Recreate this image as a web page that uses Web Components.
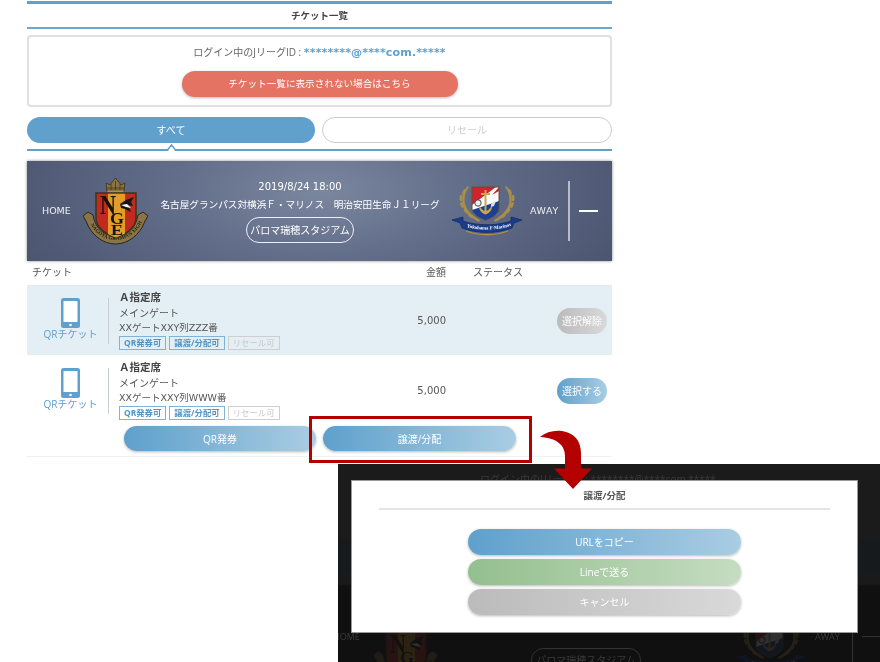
<!DOCTYPE html>
<html lang="ja">
<head>
<meta charset="utf-8">
<title>チケット一覧</title>
<style>
  html, body { margin: 0; padding: 0; background: #fff; }
  body {
    width: 880px; height: 662px; overflow: hidden; position: relative;
    font-family: "Open Sans", "Noto Sans CJK JP", sans-serif; color: #555;
  }
  #page { width: 585px; margin-left: 27px; display: block; filter: blur(.4px); }
</style>
</head>
<body>
<div id="page">
  <title-bar>チケット一覧</title-bar>
  <login-box account="********@****com.*****">チケット一覧に表示されない場合はこちら</login-box>
  <tab-bar></tab-bar>
  <match-card></match-card>
  <ticket-head></ticket-head>
  <ticket-row selected action="選択解除" seat="XXゲートXXY列ZZZ番"></ticket-row>
  <ticket-row action="選択する" seat="XXゲートXXY列WWW番">
    <pill-button style="width:192px">QR発券</pill-button>
    <pill-button style="width:193px">譲渡/分配</pill-button>
  </ticket-row>
</div>
<share-modal></share-modal>
<red-callout></red-callout>

<script>
const FONT = `"Open Sans", "Noto Sans CJK JP", sans-serif`;
const LATIN = `"DejaVu Sans", "Noto Sans CJK JP", sans-serif`;

class TitleBar extends HTMLElement {
    constructor() {
        super();
        this.attachShadow({mode: "open"}).innerHTML = `
            <style>
                :host { display: block; margin-top: 1px; height: 23px; border-top: 3px solid #5fa0cc; border-bottom: 2px solid #6aa8d2; }
                div { height: 23px; text-align: center; font: bold 9.5px/23px ${FONT}; color: #444; }
            </style>
            <div><slot></slot></div>`;
    }
}

class PillButton extends HTMLElement {
    constructor() {
        super();
        this.attachShadow({mode: "open"}).innerHTML = `
            <style>
                :host {
                    display: flex; align-items: center; justify-content: center;
                    height: 25px; border-radius: 13px;
                    background: linear-gradient(90deg, #5fa0cc, #a9cde3);
                    color: #fff; font: 10px/1 ${FONT};
                    box-shadow: 0 1px 3px rgba(0,0,0,.28);
                }
                :host([tone="green"]) { background: linear-gradient(90deg, #94bf8f, #c5dcc0); }
                :host([tone="grey"]) { background: linear-gradient(90deg, #bbbbbb, #d9d9d9); }
                :host([tone="red"]) { background: #e57363; }
            </style>
            <slot></slot>`;
    }
}

class LoginBox extends HTMLElement {
    constructor() {
        super();
        this.attachShadow({mode: "open"}).innerHTML = `
            <style>
                :host { display: block; margin-top: 6px; height: 72px; box-sizing: border-box; border: 2px solid #e0e0e0; border-radius: 4px; background: #fff; padding-top: 7px; }
                .id { text-align: center; font: 10px/16px ${FONT}; color: #666; }
                .id b { color: #5fa0cc; font-size: 11.1px; font-family: "DejaVu Sans", sans-serif; letter-spacing: .1px; }
                pill-button { width: 276px; margin: 10px auto 0; font-size: 9.6px; height: 26px; }
            </style>
            <div class="id">ログイン中のJリーグID : <b>${this.getAttribute('account')}</b></div>
            <pill-button tone="red"><slot></slot></pill-button>`;
    }
}

class TabBar extends HTMLElement {
    constructor() {
        super();
        this.attachShadow({mode: "open"}).innerHTML = `
            <style>
                :host { display: block; margin-top: 10px; height: 34px; position: relative; border-bottom: 2px solid #5fa0cc; box-sizing: border-box; }
                .tabs { display: flex; gap: 7px; }
                .tab { flex: 1; height: 26px; box-sizing: border-box; border-radius: 13px; display: flex; align-items: center; justify-content: center; font: 10px/1 ${FONT}; }
                .on { background: #5fa0cc; color: #fff; }
                .off { border: 1px solid #ccc; color: #ccc; background: #fff; }
                svg { position: absolute; left: 138px; bottom: -2px; }
            </style>
            <div class="tabs"><div class="tab on">すべて</div><div class="tab off">リセール</div></div>
            <svg width="13" height="8" viewBox="0 0 13 8"><path d="M0 7H2.5L6.5 2L10.5 7H13" fill="#fff" stroke="#5fa0cc" stroke-width="1.6"/><path d="M3 8L6.5 3.5L10 8Z" fill="#fff"/></svg>`;
    }
}

class GrampusCrest extends HTMLElement {
    constructor() {
        super();
        this.attachShadow({mode: "open"}).innerHTML = `
            <style>:host { display: block; width: 66px; height: 67px; } svg { display: block; }
            text { font-family: "Liberation Serif", serif; }</style>
            <svg width="66" height="67" viewBox="0 0 66 67">
                <!-- crown -->
                <path d="M25 13L24 5L28 7L31 3L33.5 0L36 3L39 7L43 5L42 13Z" fill="#8c7442" stroke="#3b2f18" stroke-width=".8"/>
                <path d="M25 10H42M29 6V12M33.5 3V12M38 6V12" stroke="#3b2f18" stroke-width=".7" fill="none"/>
                <rect x="25" y="12" width="17" height="3" fill="#a8904f" stroke="#3b2f18" stroke-width=".5"/>
                <!-- ribbon -->
                <path d="M1 38L6 34L11 37C13 50 22 58 33.5 58C45 58 54 50 56 37L61 34L66 38L63 43C58 57 46 66 33.5 66C21 66 9 57 4 43Z" fill="#8a7548" stroke="#2f2512" stroke-width="1"/>
                <path id="rb" d="M7 44C13 56 23 62 33.5 62C44 62 54 56 60 44" fill="none"/>
                <text font-size="5" font-weight="bold" fill="#221a0b" letter-spacing=".1"><textPath href="#rb" startOffset="3">NAGOYA GRAMPUS EIGHT</textPath></text>
                <!-- shield -->
                <path d="M14 15H54V40C54 50 44 56 34 60C24 56 14 50 14 40Z" fill="#c02a1f" stroke="#3a3420" stroke-width="1.5"/>
                <path d="M26 15.8H43V55.5Q38 58 34 59.5Q30 58 26 56Z" fill="#e29c2c"/>
                <!-- bird -->
                <path d="M38 26L44 22L52 19L49 24L51 28L46 27L49 34L43 31L39 30Z" fill="#161616"/>
                <path d="M39 27L45 26L49 30L44 29Z" fill="#fff"/>
                <text x="18" y="36" font-size="27" font-weight="bold" fill="#17120c" textLength="16" lengthAdjust="spacingAndGlyphs">N</text>
                <text x="28" y="46" font-size="17" font-weight="bold" fill="#17120c" textLength="14" lengthAdjust="spacingAndGlyphs">G</text>
                <text x="29" y="57" font-size="14" font-weight="bold" fill="#17120c" textLength="12" lengthAdjust="spacingAndGlyphs">E</text>
            </svg>`;
    }
}

class MarinosCrest extends HTMLElement {
    constructor() {
        super();
        this.attachShadow({mode: "open"}).innerHTML = `
            <style>:host { display: block; width: 70px; height: 52px; } svg { display: block; }
            text { font-family: "Liberation Serif", serif; }</style>
            <svg width="70" height="52" viewBox="0 0 70 52">
                <!-- laurel -->
                <g fill="#a98f47">
                    <path d="M16 1C11 5 9 12 11 20C13 28 19 33 27 37L28 35C21 31 15 26 13 19C12 13 13 7 17 2Z"/>
                    <ellipse cx="12" cy="7" rx="1.5" ry="3.2" transform="rotate(20 12 7)"/><ellipse cx="9" cy="13" rx="1.5" ry="3.2"/>
                    <ellipse cx="10" cy="20" rx="1.5" ry="3.2" transform="rotate(-20 10 20)"/><ellipse cx="14" cy="26" rx="1.5" ry="3.2" transform="rotate(-40 14 26)"/>
                    <ellipse cx="19" cy="31" rx="1.5" ry="3.2" transform="rotate(-55 19 31)"/>
                    <path d="M54 1C59 5 61 12 59 20C57 28 51 33 43 37L42 35C49 31 55 26 57 19C58 13 57 7 53 2Z"/>
                    <ellipse cx="58" cy="7" rx="1.5" ry="3.2" transform="rotate(-20 58 7)"/><ellipse cx="61" cy="13" rx="1.5" ry="3.2"/>
                    <ellipse cx="60" cy="20" rx="1.5" ry="3.2" transform="rotate(20 60 20)"/><ellipse cx="56" cy="26" rx="1.5" ry="3.2" transform="rotate(40 56 26)"/>
                    <ellipse cx="51" cy="31" rx="1.5" ry="3.2" transform="rotate(55 51 31)"/>
                </g>
                <!-- shield -->
                <clipPath id="sh"><path d="M20 2H47V24C47 29 40 33 33.5 35.5C27 33 20 29 20 24Z"/></clipPath>
                <g clip-path="url(#sh)">
                    <rect x="20" y="2" width="27" height="34" fill="#fff"/>
                    <path d="M20 2H44L20 20Z" fill="#d3222f"/>
                    <path d="M47 16L20 25V36H47Z" fill="#1e3f94"/>
                    <path d="M47 2V6L40 10Z" fill="#d3222f"/>
                </g>
                <path d="M20 2H47V24C47 29 40 33 33.5 35.5C27 33 20 29 20 24Z" fill="none" stroke="#5e5430" stroke-width="1"/>
                <!-- anchor -->
                <path d="M32.5 5H34.5V8H38V10H34.5V28H32.5V10H29V8H32.5Z" fill="#c7a850"/>
                <path d="M27 21C27 26 30 28 33.5 29.5C37 28 40 26 40 21L38 23C37 25 35 26 33.5 26C32 26 30 25 29 23Z" fill="#c7a850"/>
                <circle cx="26" cy="18" r="3.2" fill="#eee" stroke="#333" stroke-width=".9"/>
                <path d="M39 19L44 16L42 21L39 22Z" fill="#d8e0f0"/>
                <!-- ribbon -->
                <path d="M0 35L11 32L11 36C26 41 44 41 59 36L59 32L70 35L62 38L60 43C44 49 26 49 10 43L8 38Z" fill="#1a3c8c" stroke="#0e2358" stroke-width=".6"/>
                <path d="M14 46C27 51 43 51 56 46" fill="none" stroke="#ad9146" stroke-width="1.3"/>
                <path id="rb2" d="M10 40.5C26 46 44 46 60 40.5" fill="none"/>
                <text font-size="4.8" font-weight="bold" fill="#fff"><textPath href="#rb2" startOffset="5">Yokohama F·Marinos</textPath></text>
            </svg>`;
    }
}

class MatchCard extends HTMLElement {
    constructor() {
        super();
        this.attachShadow({mode: "open"}).innerHTML = `
            <style>
                :host {
                    display: flex; align-items: center; margin-top: 10px; height: 100px; color: #fff;
                    background: radial-gradient(ellipse 330px 150px at 50% 30%, #7b879f 0%, #626d89 45%, #4b5570 100%);
                    box-shadow: 0 0 3px rgba(0,0,0,.45); font: 10px/1 ${FONT};
                }
                .side { font: 9.5px/1 "DejaVu Sans", sans-serif; color: #eceef2; white-space: nowrap; }
                .home { margin-left: 15px; width: 40px; }
                .mid { width: 304px; display: flex; flex-direction: column; align-items: center; }
                .date { font: 10px/14px "DejaVu Sans", sans-serif; }
                .name { margin-top: 4px; font-size: 9.65px; line-height: 14px; white-space: nowrap; }
                .place { margin-top: 5px; height: 26px; width: 108px; box-sizing: border-box; border: 1px solid #eef; border-radius: 13px; display: flex; align-items: center; justify-content: center; }
                .away { margin-left: 8px; width: 29px; letter-spacing: .6px; }
                .bar { margin-left: 9px; width: 2px; height: 60px; background: #b8bcc8; }
                .dash { margin-left: 9px; width: 19px; height: 2px; background: #fff; }
            </style>
            <span class="side home">HOME</span>
            <grampus-crest></grampus-crest>
            <div class="mid">
                <div class="date">2019/8/24 18:00</div>
                <div class="name">名古屋グランパス対横浜Ｆ・マリノス　明治安田生命Ｊ１リーグ</div>
                <div class="place">パロマ瑞穂スタジアム</div>
            </div>
            <marinos-crest></marinos-crest>
            <span class="side away">AWAY</span>
            <i class="bar"></i>
            <i class="dash"></i>`;
    }
}

class TicketHead extends HTMLElement {
    constructor() {
        super();
        this.attachShadow({mode: "open"}).innerHTML = `
            <style>
                :host { display: flex; height: 25px; box-sizing: border-box; padding: 6px 89px 0 5px; font: 10px/10px ${FONT}; color: #555; border-bottom: 1px solid #e3e9ee; }
                .ticket { flex: 1; }
                .status { margin-left: 27px; }
            </style>
            <span class="ticket">チケット</span><span>金額</span><span class="status">ステータス</span>`;
    }
}

class TicketRow extends HTMLElement {
    constructor() {
        super();
        this.attachShadow({mode: "open"}).innerHTML = `
            <style>
                :host { display: block; border-bottom: 1px solid #f0f0f0; font: 10px/1 ${FONT}; color: #555; }
                :host([selected]) { border-bottom: 0; margin-bottom: 1px; }
                :host([selected]) .main { background: #e3eef5; }
                .main { display: grid; grid-template-columns: 82px 1fr 65px 166px; align-items: center; height: 69px; }
                .ticket { display: flex; flex-direction: column; align-items: center; color: #5fa0cc; font-size: 10px; height: 46px; border-right: 1px solid #c9ced2; padding-left: 6px; box-sizing: border-box; }
                .ticket svg { display: block; }
                .ticket span { line-height: 14px; margin-top: -1px; white-space: nowrap; }
                .info { padding-left: 10px; margin-top: -2px; }
                .info b { display: block; font-size: 10.5px; line-height: 17px; color: #444; }
                .info div { line-height: 15px; white-space: nowrap; }
                .info .seat { font: 9.5px/14px ${LATIN}; }
                .tags { display: flex; gap: 3px; margin-top: 1px; }
                .tag { height: 14px; box-sizing: border-box; padding: 0 4px; border: 1px solid #7fb4d8; color: #4f94c4; font: bold 8.4px/12px ${FONT}; }
                .tag.no { border-color: #cfcfcf; color: #c8c8c8; font-weight: normal; }
                .price { text-align: right; font: 10px/1 "DejaVu Sans", sans-serif; color: #555; }
                .act { display: flex; justify-content: flex-end; padding-right: 5px; }
                .act pill-button { width: 50px; height: 26px; font-size: 10px; white-space: nowrap; box-shadow: none; }
                .more { display: none; gap: 7px; padding: 1px 0 5px 97px; }
                .more.has { display: flex; }
            </style>
            <div class="main">
                <div class="ticket">
                    <svg width="19" height="30" viewBox="0 0 19 30"><rect width="19" height="30" rx="2.5" fill="#5fa0cc"/><rect x="2.5" y="3" width="14" height="21" rx=".5" fill="#fff"/><circle cx="9.5" cy="27" r="1.3" fill="#fff"/></svg>
                    <span>QRチケット</span>
                </div>
                <div class="info">
                    <b>Ａ指定席</b>
                    <div>メインゲート</div>
                    <div class="seat">${this.getAttribute('seat')}</div>
                    <div class="tags"><span class="tag">QR発券可</span><span class="tag">譲渡/分配可</span><span class="tag no">リセール可</span></div>
                </div>
                <div class="price">5,000</div>
                <div class="act"><pill-button ${this.hasAttribute('selected') ? 'tone="grey"' : ''}>${this.getAttribute('action')}</pill-button></div>
            </div>
            <div class="more"><slot></slot></div>`;
        // 行ボタンがある時だけ下段を出す
        if (this.children.length) this.shadowRoot.querySelector('.more').classList.add('has');
    }
}

class ShareModal extends HTMLElement {
    constructor() {
        super();
        this.attachShadow({mode: "open"}).innerHTML = `
            <style>
                :host {
                    position: absolute; left: 338px; top: 464px; width: 542px; height: 198px; overflow: hidden;
                    box-sizing: border-box; padding: 16px 22px 0 13px;
                    background: linear-gradient(180deg, #1b1b1b 0, #1b1b1b 75px, #171a1c 77px, #171a1c 110px, #1a1a1a 112px, #1a1a1a 120px, #101010 122px);
                    filter: blur(.4px); font: 10px/1 ${FONT};
                }
                .ghost { position: absolute; color: #3a3a3a; white-space: nowrap; filter: blur(.6px); }
                .ghost.crest { opacity: .13; }
                .panel { position: relative; height: 153px; box-sizing: border-box; background: #fff; border: 1px solid #999; padding: 0 27px; text-align: center; }
                .title { height: 27px; border-bottom: 2px solid #e4e4e4; font: bold 9.5px/30px ${FONT}; color: #555; }
                .btns { width: 273px; margin: 19px auto 0; display: flex; flex-direction: column; gap: 4.5px; }
                .btns pill-button { height: 25.5px; }
            </style>
            <span class="ghost" style="left:142px;top:10px">ログイン中のJリーグID : ********@****com.*****</span>
            <span class="ghost" style="left:-5px;top:168px;font-size:9px">HOME</span>
            <grampus-crest class="ghost crest" style="left:34px;top:153px"></grampus-crest>
            <span class="ghost" style="left:193px;top:184px;border:1px solid #333;border-radius:13px;padding:6px 4px;width:100px;text-align:center">パロマ瑞穂スタジアム</span>
            <marinos-crest class="ghost crest" style="left:398px;top:158px"></marinos-crest>
            <span class="ghost" style="left:477px;top:168px;font-size:9px">AWAY</span>
            <span class="ghost" style="left:514px;top:155px;width:1px;height:50px;background:#333"></span>
            <span class="ghost" style="left:524px;top:172px;width:19px;height:1px;background:#333"></span>
            <div class="panel">
                <div class="title">譲渡/分配</div>
                <div class="btns">
                    <pill-button>URLをコピー</pill-button>
                    <pill-button tone="green">Lineで送る</pill-button>
                    <pill-button tone="grey">キャンセル</pill-button>
                </div>
            </div>`;
    }
}

class RedCallout extends HTMLElement {
    constructor() {
        super();
        this.attachShadow({mode: "open"}).innerHTML = `
            <style>
                :host { position: absolute; left: 0; top: 0; width: 0; height: 0; display: block; }
                .box { position: absolute; left: 309px; top: 416px; width: 223px; height: 47px; box-sizing: border-box; border: 3px solid #b30000; }
                svg { position: absolute; left: 538px; top: 430px; }
            </style>
            <div class="box"></div>
            <svg width="56" height="62" viewBox="0 0 56 62">
                <path d="M2 7C8 2 16 0 24 1C36 3 43 10 43 24V38.5H54L35 59L16 38.5H27V26C27 16 20 8 2 7Z" fill="#b30000"/>
            </svg>`;
    }
}

customElements.define('title-bar', TitleBar);
customElements.define('pill-button', PillButton);
customElements.define('login-box', LoginBox);
customElements.define('tab-bar', TabBar);
customElements.define('grampus-crest', GrampusCrest);
customElements.define('marinos-crest', MarinosCrest);
customElements.define('match-card', MatchCard);
customElements.define('ticket-head', TicketHead);
customElements.define('ticket-row', TicketRow);
customElements.define('share-modal', ShareModal);
customElements.define('red-callout', RedCallout);
</script>
</body>
</html>
